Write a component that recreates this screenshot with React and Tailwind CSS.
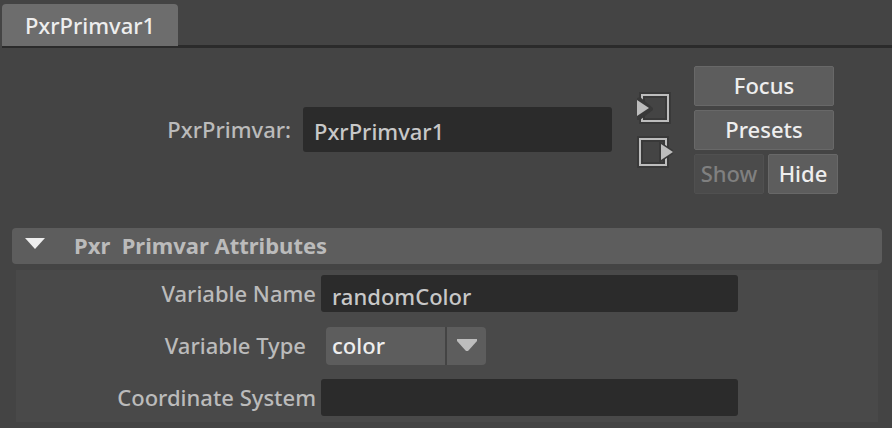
import { useState } from "react";

function InputConnectionIcon() {
  return (
    <svg width="36" height="34" viewBox="0 0 36 34" aria-hidden="true">
      <rect x="5" y="3" width="26" height="26" fill="none" stroke="#393939" strokeWidth="6" />
      <rect x="5" y="3" width="26" height="26" fill="none" stroke="#bdbdbd" strokeWidth="2" />
      <path d="M0 6L3 5L16 16V18L3 28L0 28Z" fill="#393939" />
      <path d="M0 8L12 16L0 24Z" fill="#bdbdbd" />
    </svg>
  );
}

function OutputConnectionIcon() {
  return (
    <svg width="36" height="34" viewBox="0 0 36 34" aria-hidden="true">
      <rect x="3" y="3" width="26" height="26" fill="none" stroke="#393939" strokeWidth="6" />
      <rect x="3" y="3" width="26" height="26" fill="none" stroke="#bdbdbd" strokeWidth="2" />
      <path d="M22 5L36 14V18L22 27Z" fill="#393939" />
      <path d="M24 8L36 16L24 24Z" fill="#bdbdbd" />
    </svg>
  );
}

function PanelButton({ className = "", children, ...props }) {
  return (
    <button
      type="button"
      className={`h-10 rounded-xs border border-[#686868] bg-[#5d5d5d] pb-[2px] text-[#eeeeee] disabled:border-[#505050] disabled:bg-[#4b4b4b] disabled:text-[#808080] ${className}`}
      {...props}
    >
      {children}
    </button>
  );
}

function AttributeRow({ id, label, labelPadding = "pr-[5px]", children }) {
  return (
    <div className="flex h-[38px] items-start">
      <label htmlFor={id} className={`w-[305px] shrink-0 text-right leading-9 ${labelPadding}`}>
        {label}
      </label>
      {children}
    </div>
  );
}

const fieldClass =
  "min-w-0 rounded-[3px] bg-[#2b2b2b] px-[11px] pt-1 text-[#c8c8c8] outline-none";

export default function App() {
  const [node, setNode] = useState("PxrPrimvar1");
  const [name, setName] = useState("randomColor");
  const [type, setType] = useState("color");
  const [system, setSystem] = useState("");
  const [open, setOpen] = useState(true);

  return (
    <main className="min-h-screen bg-[#444444] pt-1 font-['Noto_Sans','Open_Sans',sans-serif] text-[22px] leading-7 font-medium text-[#bbbbbb]">
      <div role="tablist" className="ml-[2px] flex h-11 items-start border-b-[3px] border-[#2b2b2b]">
        <button
          type="button"
          role="tab"
          aria-selected="true"
          className="h-[42px] w-44 shrink-0 rounded-t bg-[#6d6d6d] text-[#eeeeee]"
        >
          {node}
        </button>
      </div>

      <section className="flex items-center pt-[18px]">
        <div className="flex items-center pb-[2px]">
          <label htmlFor="node" className="w-[303px] shrink-0 pr-3 text-right">
            PxrPrimvar:
          </label>
          <input
            id="node"
            value={node}
            onChange={(e) => setNode(e.target.value)}
            className={`h-[45px] w-[309px] ${fieldClass}`}
          />
        </div>
        <div className="ml-[25px] flex shrink-0 flex-col gap-[10px] pt-[2px]">
          <button type="button" aria-label="Go to input connection">
            <InputConnectionIcon />
          </button>
          <button type="button" aria-label="Go to output connection">
            <OutputConnectionIcon />
          </button>
        </div>
        <div className="ml-[21px] flex shrink-0 flex-col items-start gap-1">
          <PanelButton className="w-[140px]">Focus</PanelButton>
          <PanelButton className="w-[140px]">Presets</PanelButton>
          <div className="flex gap-1">
            <PanelButton className="w-[70px]" disabled>Show</PanelButton>
            <PanelButton className="w-[70px]">Hide</PanelButton>
          </div>
        </div>
      </section>

      <section className="mt-[34px] mr-[10px] ml-3">
        <h2>
          <button
            type="button"
            aria-expanded={open}
            onClick={() => setOpen(!open)}
            className="flex h-9 w-full items-center rounded bg-[#5d5d5d] pb-[2px] pl-[13px] text-left font-bold whitespace-pre"
          >
            <svg width="20" height="12" viewBox="0 0 20 12" className="mr-[29px] mb-1" aria-hidden="true">
              <path d="M0 1H20L10 12Z" fill="#eeeeee" />
            </svg>
            {"Pxr  Primvar Attributes"}
          </button>
        </h2>
        {open && (
          <div className="mx-1 mt-[6px] flex flex-col gap-[14px] bg-[#494949] py-[5px]">
            <AttributeRow id="name" label="Variable Name">
              <input
                id="name"
                value={name}
                onChange={(e) => setName(e.target.value)}
                className={`h-[37px] w-[417px] ${fieldClass}`}
              />
            </AttributeRow>
            <AttributeRow id="type" label="Variable Type" labelPadding="pr-[15px]">
              <div className="relative ml-[5px] h-[38px] w-40">
                <select
                  id="type"
                  value={type}
                  onChange={(e) => setType(e.target.value)}
                  className="h-full w-full appearance-none rounded bg-[#5d5d5d] pb-[2px] pl-[6px] text-[#eeeeee] outline-none"
                >
                  <option>color</option>
                  <option>float</option>
                  <option>vector</option>
                </select>
                <span className="pointer-events-none absolute inset-y-0 right-0 flex w-[41px] items-center justify-center border-l-2 border-[#444444] pb-[2px]">
                  <svg width="20" height="12" viewBox="0 0 20 12" aria-hidden="true">
                    <path d="M0 0H20V2L11 12H9L0 2Z" fill="#bdbdbd" />
                  </svg>
                </span>
              </div>
            </AttributeRow>
            <AttributeRow id="system" label="Coordinate System">
              <input
                id="system"
                value={system}
                onChange={(e) => setSystem(e.target.value)}
                className={`h-[37px] w-[417px] ${fieldClass}`}
              />
            </AttributeRow>
          </div>
        )}
      </section>
    </main>
  );
}
